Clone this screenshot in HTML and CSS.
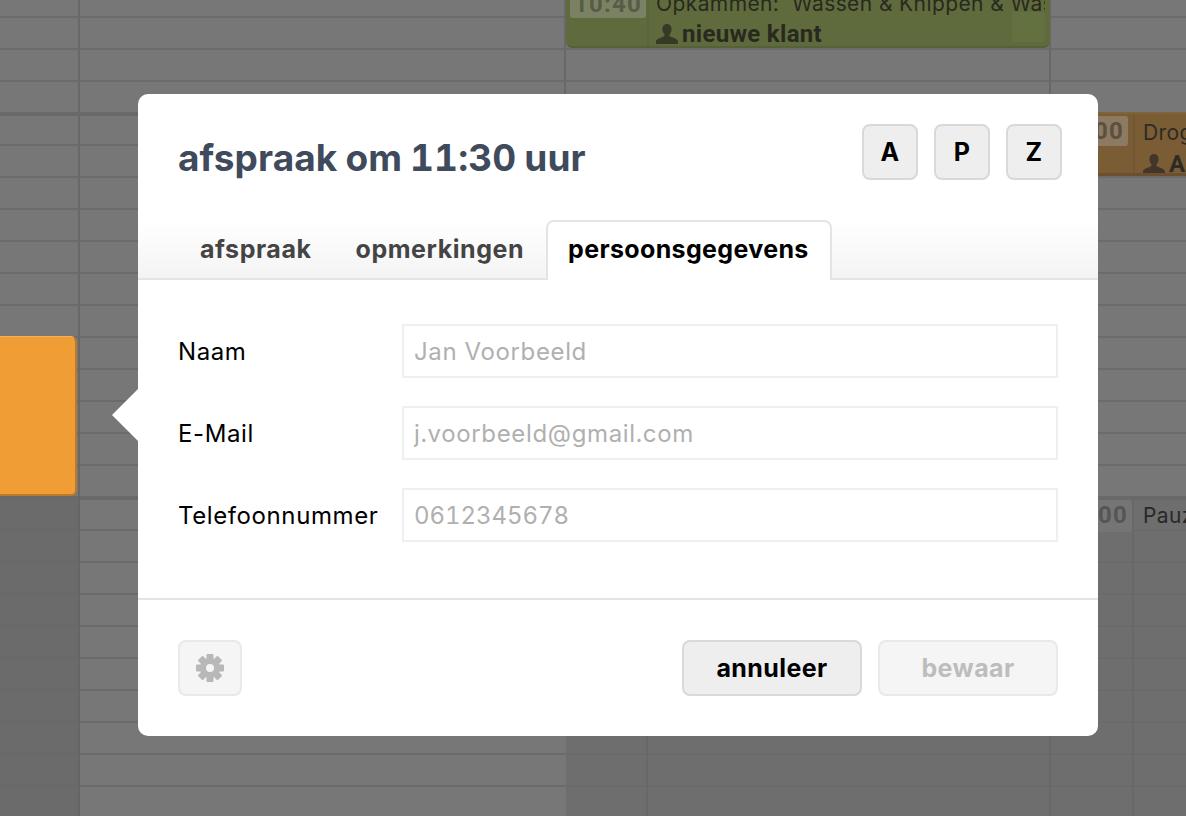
FILE: index.html
```html
<!DOCTYPE html>
<html lang="nl">
<head>
<meta charset="utf-8">
<title>afspraak</title>
<link rel="stylesheet" href="styles.css">
</head>
<body>
<div class="calendar">
  <div class="cal-row cal-top">
    <div class="cell w-time"></div>
    <div class="cell w-day"></div>
    <div class="cell w-green"></div>
    <div class="cell w-rest"></div>
  </div>
  <div class="cal-row cal-bottom">
    <div class="cell off w-time"></div>
    <div class="cell lit w-day"></div>
    <div class="cell off w-a"></div>
    <div class="cell off w-b"></div>
    <div class="cell off w-c"></div>
    <div class="cell off w-d"></div>
  </div>

  <div class="event orange"></div>

  <div class="event green">
    <div class="ev-time">10:40</div>
    <div class="ev-main">
      <div class="ev-title">Opkammen:&nbsp; Wassen &amp; Knippen &amp; Wassen</div>
      <div class="ev-client">
        <svg class="person" viewBox="0 0 22 20" aria-hidden="true"><path d="M11 0c-3 0-4.600 2.300-4.600 5.200 0 2 .8 3.800 2 5 .4.500.3 1.500-.4 2C6 13.600 0 14.500 0 17.500V20h22v-2.500c0-3-6-3.900-8-5.300-.7-.5-.8-1.500-.4-2 1.200-1.200 2-3 2-5C15.600 2.300 14 0 11 0z"/></svg>
        <span>nieuwe klant</span>
      </div>
    </div>
    <div class="ev-handle"></div>
  </div>

  <div class="event brown">
    <div class="ev-time">11:00</div>
    <div class="ev-main">
      <div class="ev-title">Drogen</div>
      <div class="ev-client">
        <svg class="person" viewBox="0 0 22 20" aria-hidden="true"><path d="M11 0c-3 0-4.600 2.300-4.600 5.200 0 2 .8 3.800 2 5 .4.500.3 1.500-.4 2C6 13.600 0 14.500 0 17.500V20h22v-2.500c0-3-6-3.900-8-5.300-.7-.5-.8-1.500-.4-2 1.200-1.200 2-3 2-5C15.600 2.300 14 0 11 0z"/></svg>
        <span>Anna</span>
      </div>
    </div>
  </div>

  <div class="event pause">
    <div class="ev-time">12:00</div>
    <div class="ev-main">
      <div class="ev-title">Pauze</div>
    </div>
  </div>
</div>

<div class="dialog">
  <span class="arrow"></span>
  <header class="dlg-head">
    <h1 class="dlg-title">afspraak om 11:30 uur</h1>
    <div class="key-group">
      <button class="btn key" type="button">A</button>
      <button class="btn key" type="button">P</button>
      <button class="btn key" type="button">Z</button>
    </div>
  </header>

  <nav class="tabs">
    <a class="tab">afspraak</a>
    <a class="tab">opmerkingen</a>
    <a class="tab active">persoonsgegevens</a>
  </nav>

  <form class="form">
    <label class="row"><span class="row-label">Naam</span><input class="field" type="text" placeholder="Jan Voorbeeld"></label>
    <label class="row"><span class="row-label">E-Mail</span><input class="field" type="text" placeholder="j.voorbeeld@gmail.com"></label>
    <label class="row"><span class="row-label">Telefoonnummer</span><input class="field field-phone" type="text" placeholder="0612345678"></label>
  </form>

  <footer class="dlg-foot">
    <button class="btn gear-btn" type="button" aria-label="instellingen">
      <svg class="gear" viewBox="0 0 28 28" aria-hidden="true">
        <g class="gear-teeth">
          <rect x="10.500" y="0" width="7" height="28" rx="1"/>
          <rect x="10.500" y="0" width="7" height="28" rx="1" transform="rotate(45 14 14)"/>
          <rect x="10.500" y="0" width="7" height="28" rx="1" transform="rotate(90 14 14)"/>
          <rect x="10.500" y="0" width="7" height="28" rx="1" transform="rotate(135 14 14)"/>
          <circle cx="14" cy="14" r="10"/>
        </g>
        <circle class="gear-hole" cx="14" cy="14" r="4"/>
      </svg>
    </button>
    <div class="foot-actions">
      <button class="btn action" type="button">annuleer</button>
      <button class="btn action disabled" type="button">bewaar</button>
    </div>
  </footer>
</div>
</body>
</html>
```

FILE: styles.css
```css
* { box-sizing: border-box; }

html, body {
  margin: 0;
  height: 100%;
  overflow: hidden;
}

body {
  position: relative;
  width: 1186px;
  height: 816px;
  background: #777;
  font-family: Inter, "Liberation Sans", sans-serif;
  color: #000;
}

/* calendar behind the dialog */
.calendar {
  position: absolute;
  inset: 0;
  display: flex;
  flex-direction: column;
  overflow: hidden;
}

.cal-row { display: flex; }
.cal-top { height: 496px; }
.cal-bottom { flex: 1; }

.cell {
  border-right: 2px solid #686868;
  background-color: #777;
}

.cal-top .cell {
  background-image:
    linear-gradient(#696969, #696969),
    repeating-linear-gradient(to bottom, #777 0 16px, #6b6b6b 16px 18px, #777 18px 32px);
  background-repeat: no-repeat, repeat;
  background-size: 100% 4px, auto;
  background-position: 0 112px, 0 0;
}

.cal-bottom .lit {
  background-image:
    linear-gradient(#696969, #696969),
    repeating-linear-gradient(to bottom, #777 0 30px, #6b6b6b 30px 32px);
  background-repeat: no-repeat, repeat;
  background-size: 100% 4px, auto;
  background-position: 0 0, 0 3px;
}

.cal-bottom .off {
  background-color: #6e6e6e;
  background-image:
    linear-gradient(#696969, #696969),
    repeating-linear-gradient(to bottom, #6e6e6e 0 30px, #6b6b6b 30px 32px);
  background-repeat: no-repeat, repeat;
  background-size: 100% 4px, auto;
  background-position: 0 0, 0 3px;
}

.cal-bottom .off.w-time {
  background-color: #6b6b6b;
  background-image: repeating-linear-gradient(to bottom, #6b6b6b 0 30px, #696969 30px 32px);
  background-position: 0 3px;
  background-size: auto;
  background-repeat: repeat;
  border-right-color: #656565;
}

.cal-top .w-time, .cal-bottom .w-time { width: 80px; }
.cal-top .w-day { width: 486px; }
.cal-top .w-green { width: 485px; }
.cal-top .w-rest { flex: 1; border-right: 0; }
.cal-bottom .w-day { width: 486px; border-right: 0; }
.w-a { width: 82px; }
.w-b { width: 403px; }
.w-c { width: 83px; }
.w-d { flex: 1; border-right: 0; }

.event {
  position: absolute;
  display: flex;
  overflow: hidden;
}

.orange {
  left: -8px;
  top: 336px;
  width: 85px;
  height: 160px;
  background: #f09d36;
  border-top: 1px solid #f5b053;
  border-right: 2px solid #b97a2b;
  border-bottom: 2px solid #b97a2b;
  border-radius: 6px;
}

.green {
  left: 566px;
  top: -18px;
  width: 484px;
  height: 66px;
  background: #5f6b3d;
  border-bottom: 2px solid #56613a;
  border-radius: 6px;
}

.brown {
  left: 1040px;
  top: 112px;
  width: 180px;
  height: 64px;
  background: #7a5c35;
  border-bottom: 3px solid #6b5030;
  border-top: 2px solid #80623b;
}

.pause {
  left: 1040px;
  top: 498px;
  width: 180px;
  height: 90px;
}

.ev-time {
  flex: none;
  height: 31px;
  margin: 2px 0 0 4px;
  padding: 0 4px;
  border-radius: 3px;
  font: 700 24px/30px Roboto, sans-serif;
  letter-spacing: 1.2px;
  text-align: right;
}

.ev-main {
  flex: 1;
  min-width: 0;
  margin-left: 5px;
  padding-left: 9px;
  white-space: nowrap;
  overflow: hidden;
}

.ev-title {
  font: 400 21px/30px Inter, sans-serif;
  letter-spacing: .4px;
  color: #28291f;
}

.ev-client {
  display: flex;
  align-items: center;
  gap: 4px;
  font: 700 24px/30px Roboto, sans-serif;
  letter-spacing: .3px;
  color: #28291f;
}

.person { flex: none; width: 22px; height: 20px; fill: currentColor; opacity: .75; }

.green .ev-time { width: 76px; height: 36px; margin: 0 0 0 4px; padding-top: 9px; line-height: 26px; background: #7b8263; color: #565c45; text-align: center; }
.green .ev-main { margin-left: 1px; padding-left: 7px; padding-top: 9px; border-left: 2px solid #59653a; margin-right: 5px; }
.green .ev-title { line-height: 26px; }
.green .ev-client { margin-top: 2px; }
.ev-handle { position: absolute; right: 5px; top: 30px; width: 33px; height: 30px; background: #637040; border-radius: 3px; }

.brown .ev-time { width: 88px; margin: 2px 0 0 0; height: 30px; background: #8d7a63; color: #5b4f3f; }
.brown .ev-main { padding-left: 8px; margin-left: 5px; border-left: 2px solid #735632; }
.brown .ev-title { line-height: 38px; color: #2e2a25; }
.brown .ev-client { margin-top: -3px; letter-spacing: 3px; color: #2e2a25; }

.pause .ev-time { width: 92px; margin: 2px 0 0 0; height: 32px; background: #757575; color: #555; }
.pause .ev-main { padding-left: 9px; margin-left: 0; border-left: 2px solid #686868; }
.pause .ev-title { line-height: 36px; color: #282828; }

/* dialog */
.dialog {
  position: absolute;
  left: 138px;
  top: 94px;
  width: 960px;
  height: 642px;
  display: flex;
  flex-direction: column;
  background: #fff;
  border-radius: 10px;
}

.arrow {
  position: absolute;
  left: -26px;
  top: 295px;
  width: 26px;
  height: 52px;
  background: #fff;
  clip-path: polygon(100% 0, 0 50%, 100% 100%);
}

.dlg-head {
  display: flex;
  flex: none;
  justify-content: space-between;
  height: 126px;
  padding: 30px 36px 0 40px;
}

.dlg-title {
  margin: 0;
  font-size: 37px;
  font-weight: 700;
  font-feature-settings: "tnum";
  line-height: 68px;
  color: #3f4a5c;
  letter-spacing: .1px;
  word-spacing: -2px;
}

.key-group { display: flex; gap: 16px; }

.btn {
  margin: 0;
  height: 56px;
  padding: 0;
  border: 2px solid #d9d9d9;
  border-radius: 8px;
  background: #eee;
  color: #000;
  font-family: inherit;
  font-size: 25px;
  font-weight: 700;
  letter-spacing: .4px;
}

.key { width: 56px; }

.tabs {
  display: flex;
  flex: none;
  height: 60px;
  padding-left: 40px;
  background: linear-gradient(to bottom, #fff, #f4f4f4);
  border-bottom: 2px solid #e4e4e4;
}

.tab {
  height: 60px;
  padding: 0 22px;
  font-size: 25px;
  font-weight: 700;
  letter-spacing: .55px;
  line-height: 58px;
  color: #444;
}

.tab.active {
  width: 286px;
  padding: 0 20px;
  letter-spacing: .35px;
  line-height: 54px;
  background: #fff;
  color: #000;
  border: 2px solid #e4e4e4;
  border-bottom: 0;
  border-radius: 8px 8px 0 0;
}

.form {
  display: flex;
  flex-direction: column;
  gap: 28px;
  padding: 44px 40px 56px;
  flex: 1;
}

.row { display: flex; align-items: center; }

.row-label {
  flex: none;
  width: 224px;
  font-size: 24px;
  letter-spacing: .6px;
}

.field {
  flex: 1;
  min-width: 0;
  height: 54px;
  padding: 0 10px;
  border: 2px solid #efefef;
  border-radius: 0;
  outline: 0;
  background: #fff;
  font-family: inherit;
  font-size: 24px;
  font-feature-settings: "tnum";
  letter-spacing: .65px;
}

.field-phone { letter-spacing: -.05px; }

.field::placeholder { color: #b0b0b0; opacity: 1; }

.dlg-foot {
  display: flex;
  flex: none;
  justify-content: space-between;
  padding: 40px;
  border-top: 2px solid #e4e4e4;
}

.foot-actions { display: flex; gap: 16px; }

.gear-btn {
  width: 64px;
  display: flex;
  align-items: center;
  justify-content: center;
  background: #f5f5f5;
  border-color: #e9e9e9;
}

.gear { width: 28px; height: 28px; }
.gear-teeth { fill: #b8b8b8; }
.gear-hole { fill: #f5f5f5; }

.action { width: 180px; }

.action.disabled {
  background: #f5f5f5;
  border-color: #e9e9e9;
  color: #bdbdbd;
}
```
